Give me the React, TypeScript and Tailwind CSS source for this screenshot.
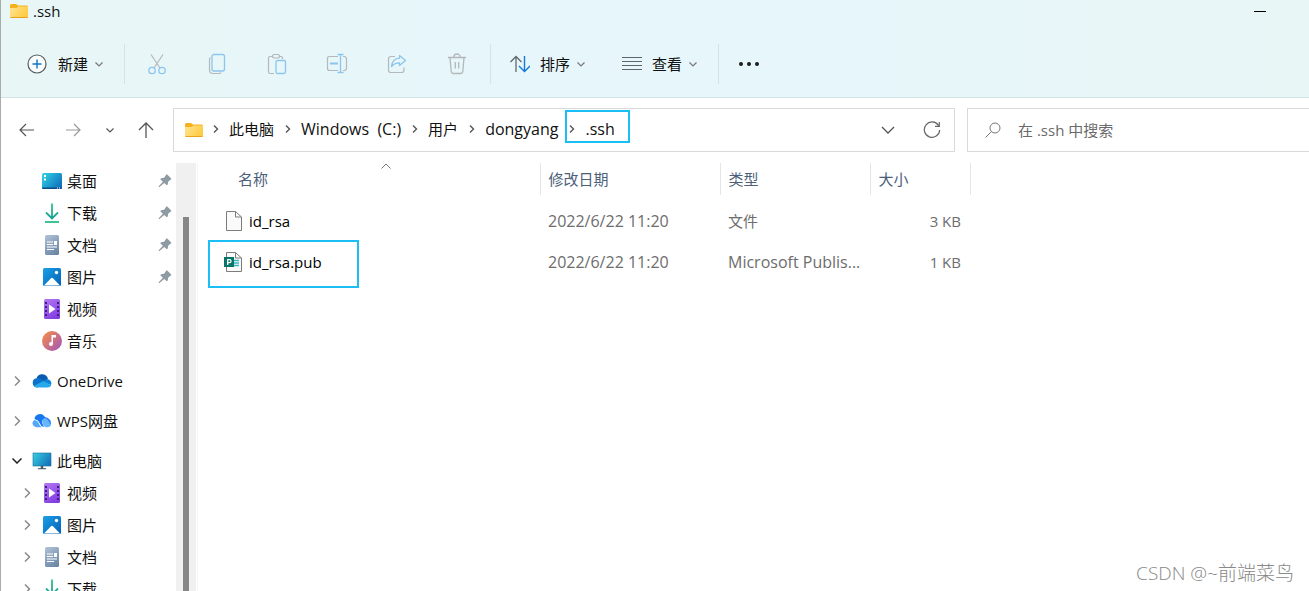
import type { ReactNode } from "react";
import { clsx } from "clsx";

type IconName = "desktop" | "download" | "document" | "picture" | "video" | "music" | "onedrive" | "wps" | "pc";

interface TreeItem {
    label: string;
    icon: IconName;
    pinned?: boolean;
    nested?: boolean;
    state?: "closed" | "open";
    spaced?: boolean;
}

const treeItems: TreeItem[] = [
    { label: "桌面", icon: "desktop", pinned: true, nested: true },
    { label: "下载", icon: "download", pinned: true, nested: true },
    { label: "文档", icon: "document", pinned: true, nested: true },
    { label: "图片", icon: "picture", pinned: true, nested: true },
    { label: "视频", icon: "video", nested: true },
    { label: "音乐", icon: "music", nested: true },
    { label: "OneDrive", icon: "onedrive", state: "closed", spaced: true },
    { label: "WPS网盘", icon: "wps", state: "closed", spaced: true },
    { label: "此电脑", icon: "pc", state: "open", spaced: true },
    { label: "视频", icon: "video", nested: true, state: "closed" },
    { label: "图片", icon: "picture", nested: true, state: "closed" },
    { label: "文档", icon: "document", nested: true, state: "closed" },
    { label: "下载", icon: "download", nested: true, state: "closed" },
];

const files = [
    { name: "id_rsa", date: "2022/6/22 11:20", type: "文件", size: "3 KB" },
    { name: "id_rsa.pub", date: "2022/6/22 11:20", type: "Microsoft Publis...", size: "1 KB", marked: true },
];

const crumbs = ["此电脑", "Windows  (C:)", "用户", "dongyang", ".ssh"];

// Latin labels are set one size up so they sit level with the Chinese ones
const latinSize = (text: string) => (/[a-z]/i.test(text) ? "text-[16px]" : "text-[15px]");

function Svg({ w, h, children, className }: { w: number; h: number; children: ReactNode; className?: string }) {
    return (
        <svg
            width={w}
            height={h}
            viewBox={`0 0 ${w} ${h}`}
            fill="none"
            aria-hidden="true"
            className={clsx("shrink-0", className)}
        >
            {children}
        </svg>
    );
}

function FolderIcon() {
    return (
        <Svg w={18} h={14}>
            <path d="M0 1.5Q0 0 1.5 0H6l2 1.5H16.500Q18 1.500 18 3V12H0Z" fill="#f5b21d" />
            <path d="M0 4H6.500L8.500 2.500H18V12.500Q18 14 16.500 14H1.500Q0 14 0 12.500Z" fill="url(#folderFront)" />
            <path d="M0 12.500Q0 14 1.500 14H16.500Q18 14 18 12.500V13H0Z" fill="#e9a21c" />
            <defs>
                <linearGradient id="folderFront" x1="0" y1="2" x2="18" y2="14" gradientUnits="userSpaceOnUse">
                    <stop stopColor="#ffe594" />
                    <stop offset="1" stopColor="#ffc736" />
                </linearGradient>
            </defs>
        </Svg>
    );
}

function Chevron({ className }: { className?: string }) {
    return (
        <Svg w={8} h={5} className={className}>
            <path d="M.5.5 4 4 7.500.5" stroke="currentColor" strokeWidth="1.200" />
        </Svg>
    );
}

function CrumbChevron() {
    return (
        <Svg w={6} h={8} className="text-[#555]">
            <path d="M1 .5 4.500 4 1 7.500" stroke="currentColor" strokeWidth="1.400" />
        </Svg>
    );
}

function TreeIcon({ name }: { name: IconName }) {
    switch (name) {
        case "desktop":
            return (
                <Svg w={20} h={20}>
                    <rect y="2" width="20" height="16" rx="1.500" fill="url(#screen)" />
                    <path d="M0 16.500H20Q20 18 18.500 18H1.500Q0 18 0 16.500Z" fill="#0b4f86" />
                    <path d="M2 4h2v2H2zM2 7.500h2v2H2z" fill="#fff" />
                    <path d="M15 17h1M17 17h1" stroke="#fff" />
                    <defs>
                        <linearGradient id="screen" x1="0" y1="2" x2="20" y2="18" gradientUnits="userSpaceOnUse">
                            <stop stopColor="#33d6e6" />
                            <stop offset="1" stopColor="#0c64b8" />
                        </linearGradient>
                    </defs>
                </Svg>
            );
        case "download":
            return (
                <Svg w={20} h={20}>
                    <path d="M10 .5V15M4 9.500l6 6 6-6" stroke="url(#down)" strokeWidth="1.800" />
                    <path d="M3 19H17" stroke="#2bbd86" strokeWidth="1.800" />
                    <defs>
                        <linearGradient id="down" x1="0" y1="0" x2="0" y2="18" gradientUnits="userSpaceOnUse">
                            <stop stopColor="#35c481" />
                            <stop offset="1" stopColor="#119c9a" />
                        </linearGradient>
                    </defs>
                </Svg>
            );
        case "document":
            return (
                <Svg w={20} h={20}>
                    <rect x="3" width="14" height="20" rx="1.500" fill="url(#doc)" />
                    <path d="M5 7h6M5 9.500h6M5 12h10M5 14.500h7" stroke="#fff" strokeWidth="1.200" />
                    <path d="M12 6h3v4h-3z" fill="#fff" />
                    <defs>
                        <linearGradient id="doc" x1="3" y1="0" x2="17" y2="20" gradientUnits="userSpaceOnUse">
                            <stop stopColor="#b1c3d8" />
                            <stop offset="1" stopColor="#64809f" />
                        </linearGradient>
                    </defs>
                </Svg>
            );
        case "picture":
            return (
                <Svg w={20} h={20}>
                    <rect x="1" y="1" width="18" height="18" rx="1.500" fill="url(#pic)" />
                    <path d="M2 18.500 9 11.300Q10 10.300 11 11.300L18 18.500Z" fill="#fff" />
                    <circle cx="14.500" cy="5.500" r="1.700" fill="#fff" />
                    <defs>
                        <linearGradient id="pic" x1="1" y1="1" x2="19" y2="19" gradientUnits="userSpaceOnUse">
                            <stop stopColor="#19a0e6" />
                            <stop offset="1" stopColor="#0560b8" />
                        </linearGradient>
                    </defs>
                </Svg>
            );
        case "video":
            return (
                <Svg w={20} h={20}>
                    <rect x="2" width="16" height="20" rx="1.500" fill="url(#vid)" />
                    <path d="M4 3v16M16 3v16" stroke="#42207a" strokeWidth="2" strokeDasharray="2 2" />
                    <path d="M7 5.500V14.500L13.500 10Z" fill="#fff" />
                    <defs>
                        <linearGradient id="vid" x1="2" y1="0" x2="14" y2="20" gradientUnits="userSpaceOnUse">
                            <stop stopColor="#b378f4" />
                            <stop offset="1" stopColor="#813ae0" />
                        </linearGradient>
                    </defs>
                </Svg>
            );
        case "music":
            return (
                <Svg w={20} h={20}>
                    <circle cx="10" cy="10" r="10" fill="url(#mus)" />
                    <path d="M9.500 13V4H14V6.500H11V13Z" fill="#fff" />
                    <circle cx="9" cy="13" r="2" fill="#fff" />
                    <defs>
                        <linearGradient id="mus" x1="2" y1="3" x2="17" y2="17" gradientUnits="userSpaceOnUse">
                            <stop stopColor="#f0894f" />
                            <stop offset="1" stopColor="#ae5cad" />
                        </linearGradient>
                    </defs>
                </Svg>
            );
        case "onedrive":
            return (
                <Svg w={20} h={14}>
                    <path d="M4.500 4.200A6 6 0 0 1 16 5.200L10 9Z" fill="#0a5cae" />
                    <path d="M4.500 4.200Q7 3.600 9 4.800L15 8.500 5 13.500A4.700 4.700 0 0 1 4.500 4.200Z" fill="#0c72c9" />
                    <path d="M12 6.700Q13.500 5 16 5.200A4.200 4.200 0 0 1 19 11L12 8.500Z" fill="#1284d8" />
                    <path d="M1.800 12 11.500 7 19.300 11.200Q18.300 13.500 15.700 13.500H5Q3 13.500 1.800 12Z" fill="#29a8ea" />
                </Svg>
            );
        case "wps":
            return (
                <Svg w={20} h={14}>
                    <path d="M2.500 5.200A5.500 5.500 0 0 1 12.500 2.500L15 4.500Q10.500 4 10 8.500L12 13.300Q9 12.500 7.800 9.500Q6.500 5.800 2.500 5.200Z" fill="#1677f0" />
                    <path d="M2.300 6Q6 6.500 7 10Q8 12.500 10 13.300H4.200A4 4 0 0 1 2.300 6Z" fill="#54a6fa" />
                    <path d="M10.500 5.500Q12 4 14 4.500Q16.300 5 17 7Q19.500 8 19 10.500Q18.500 13.300 15.500 13.300H13.500Q9.500 10.500 10.500 5.500Z" fill="#65b5ff" />
                    <path d="M12 3.200Q16 2.800 18.500 6.500Q19.500 9 18 10.500Q17.500 6 12 3.200Z" fill="#2b7ff2" />
                </Svg>
            );
        case "pc":
            return (
                <Svg w={20} h={18}>
                    <rect x="1" y="1" width="18" height="13" fill="url(#pcScreen)" stroke="#1a6f9f" strokeWidth=".6" />
                    <path d="M9 14h2v2.500h3V17H6v-.5h3Z" fill="#4d5963" stroke="#4d5963" strokeWidth=".5" />
                    <defs>
                        <linearGradient id="pcScreen" x1="1" y1="1" x2="19" y2="14" gradientUnits="userSpaceOnUse">
                            <stop stopColor="#36d0df" />
                            <stop offset="1" stopColor="#1068b6" />
                        </linearGradient>
                    </defs>
                </Svg>
            );
    }
}

function PinIcon() {
    return (
        <Svg w={14} h={14}>
            <path
                d="M8.300.6Q8.900.3 9.500.8L13 4.300Q13.500 5 12.900 5.400L10.300 7.600 9.700 10.600 8.800 11.300 6.200 8.900 1.500 13H.7V12.300L4.900 7.800 2.300 5.200 3 4.300 6.200 3.700Z"
                fill="#8e9ba3"
            />
        </Svg>
    );
}

function FileIcon({ publisher }: { publisher?: boolean }) {
    return (
        <Svg w={20} h={20}>
            <path d="M3.500.5H12.500L18.500 6V19.500H3.500Z" fill="#fafafa" stroke="#7c7c7c" />
            <path d="M12.500.5V6H18.500" stroke="#7c7c7c" />
            {publisher && (
                <>
                    <path d="M11 8.500h5M11 11h5M11 13.500h5" stroke="#35b9c4" strokeWidth="1.500" />
                    <rect x="1" y="5" width="10" height="10" fill="#077568" />
                    <path d="M4.700 13V7.700H6.500a1.500 1.500 0 0 1 0 3H4.700" stroke="#fff" strokeWidth="1.300" />
                </>
            )}
        </Svg>
    );
}

function ToolButton({ label, children }: { label: string; children: ReactNode }) {
    return (
        <button type="button" aria-label={label} className="flex h-10 w-10 items-center justify-center">
            <Svg w={22} h={22}>{children}</Svg>
        </button>
    );
}

function MenuButton({ label, icon, className }: { label: string; icon: ReactNode; className?: string }) {
    return (
        <button type="button" className={clsx("flex h-10 items-center", className)}>
            {icon}
            <span className="ml-[10px]">{label}</span>
            <Chevron className="ml-[7px] text-[#777]" />
        </button>
    );
}

function Divider() {
    return <span className="h-10 w-px bg-[#d6e3e4]" />;
}

function Toolbar() {
    return (
        <div className="mt-5 flex items-center pl-[26px]">
            <MenuButton
                label="新建"
                className="w-[97px]"
                icon={
                    <Svg w={20} h={20} className="mr-px">
                        <circle cx="10" cy="10" r="9" fill="#fafdfd" stroke="#555b60" strokeWidth="1.200" />
                        <path d="M10 5.500v9M5.500 10h9" stroke="#1273c8" strokeWidth="1.400" />
                    </Svg>
                }
            />
            <Divider />
            <div className="flex gap-5 px-3">
                <ToolButton label="剪切">
                    <path d="M5 1.500 14 15M17 1.500 8 15" stroke="#b3b8ba" strokeWidth="1.200" />
                    <circle cx="6" cy="17.500" r="3.200" stroke="#8cc5ee" strokeWidth="1.300" />
                    <circle cx="16" cy="17.500" r="3.200" stroke="#8cc5ee" strokeWidth="1.300" />
                </ToolButton>
                <ToolButton label="复制">
                    <path d="M4.500 4.500Q3.500 5 3.500 6.500V17Q3.500 20.500 7 20.500H13Q14.500 20.500 15 19.500" stroke="#b3b8ba" strokeWidth="1.200" />
                    <rect x="6" y="1.500" width="12.500" height="16.500" rx="2" stroke="#8cc5ee" strokeWidth="1.300" />
                </ToolButton>
                <ToolButton label="粘贴">
                    <path d="M6.500 3.500H4Q2.500 3.500 2.500 5V19Q2.500 20.500 4 20.500H8M13.500 3.500H15Q16.500 3.500 16.500 5V6" stroke="#b3b8ba" strokeWidth="1.200" />
                    <rect x="6.500" y="1.500" width="7" height="3.500" rx="1.700" stroke="#b3b8ba" strokeWidth="1.200" />
                    <rect x="10" y="7.500" width="9.500" height="13" rx="1.500" stroke="#8cc5ee" strokeWidth="1.300" />
                </ToolButton>
                <ToolButton label="重命名">
                    <path d="M12 3.500H3.500Q1.500 3.500 1.500 5.500V15.500Q1.500 17.500 3.500 17.500H12M17 3.500H18Q20.500 3.500 20.500 6V15Q20.500 17.500 18 17.500H17" stroke="#b3b8ba" strokeWidth="1.200" />
                    <path d="M11.500 1.500H17.500M11.500 19.500H17.500M14.500 1.500V19.500" stroke="#8cc5ee" strokeWidth="1.300" />
                    <path d="M4 10.500H12" stroke="#8cc5ee" strokeWidth="2" />
                </ToolButton>
                <ToolButton label="共享">
                    <path d="M9 3.500H5Q2.500 3.500 2.500 6V17Q2.500 19.500 5 19.500H15.500Q18 19.500 18 17V14.500" stroke="#b3b8ba" strokeWidth="1.200" />
                    <path d="M13.500 2.500 19.500 7.500 13.500 12.500V9.800Q8.500 9.800 5.500 13.500Q6.500 5.500 13.500 5.200Z" stroke="#8cc5ee" strokeWidth="1.300" strokeLinejoin="round" />
                </ToolButton>
                <ToolButton label="删除">
                    <path d="M2 4.500H20M8 4V3.500A3 2.500 0 0 1 14 3.500V4M4 4.500 5.200 18.500Q5.400 20.500 7.200 20.500H14.800Q16.600 20.500 16.800 18.500L18 4.500M9.300 9V15.500M12.700 9V15.500" stroke="#b3b8ba" strokeWidth="1.300" />
                </ToolButton>
            </div>
            <span className="w-px" />
            <Divider />
            <MenuButton
                label="排序"
                className="ml-[19px] w-28"
                icon={
                    <Svg w={20} h={18}>
                        <path d="M6 17V1.500M.5 7 6 1.500 11.500 7" stroke="#63696d" strokeWidth="1.300" />
                        <path d="M14.500 1V16.500M9 11l5.500 5.500L20 11" stroke="#1479d5" strokeWidth="1.400" />
                    </Svg>
                }
            />
            <MenuButton
                label="查看"
                className="w-24"
                icon={
                    <Svg w={20} h={14}>
                        <path d="M0 .5h20M0 4.500h20M0 8.500h20M0 12.500h20" stroke="#5f6568" strokeWidth="1.200" />
                    </Svg>
                }
            />
            <Divider />
            <button type="button" aria-label="查看更多" className="ml-[10px] flex h-10 w-10 items-center justify-center">
                <Svg w={20} h={4}>
                    <circle cx="2" cy="2" r="2" fill="#1b1b1b" />
                    <circle cx="10" cy="2" r="2" fill="#1b1b1b" />
                    <circle cx="18" cy="2" r="2" fill="#1b1b1b" />
                </Svg>
            </button>
        </div>
    );
}

function AddressBar() {
    return (
        <div className="flex h-11 min-w-0 flex-1 items-center border border-[#d9d9d9] pl-[11px]">
            <FolderIcon />
            <ol className="flex min-w-0 flex-1 items-center pb-[2px] pl-[10px]">
                {crumbs.map((crumb, i) => (
                    <li key={crumb} className="relative flex items-center">
                        <CrumbChevron />
                        <a href="#" className={clsx("mr-[11px] ml-[10px] leading-6 whitespace-pre", latinSize(crumb))}>{crumb}</a>
                        {i === crumbs.length - 1 && (
                            <span className="pointer-events-none absolute -top-[7px] -right-1 -bottom-[2px] -left-1 border-2 border-[#1cbff5]" />
                        )}
                    </li>
                ))}
            </ol>
            <button type="button" aria-label="以前的位置" className="flex h-10 w-10 items-center justify-center text-[#555]">
                <Svg w={14} h={8}>
                    <path d="M1 1 7 7 13 1" stroke="currentColor" strokeWidth="1.300" />
                </Svg>
            </button>
            <button type="button" aria-label="刷新" className="mr-[2px] ml-1 flex h-10 w-10 items-center justify-center text-[#666]">
                <Svg w={18} h={18}>
                    <path d="M15.500 4.500A7.700 7.700 0 1 0 16.700 9M16.300 1V5.300H12" stroke="currentColor" strokeWidth="1.200" />
                </Svg>
            </button>
        </div>
    );
}

function NavRow() {
    return (
        <div className="flex items-center py-[10px] pl-[18px]">
            <button type="button" aria-label="后退" className="text-[#555]">
                <Svg w={16} h={14}>
                    <path d="M15 7H1M7 1 1 7 7 13" stroke="currentColor" strokeWidth="1.200" />
                </Svg>
            </button>
            <button type="button" aria-label="前进" className="ml-[30px] text-[#999]">
                <Svg w={16} h={14}>
                    <path d="M1 7H15M9 1 15 7 9 13" stroke="currentColor" strokeWidth="1.200" />
                </Svg>
            </button>
            <button type="button" aria-label="最近浏览的位置" className="ml-[25px] text-[#555]">
                <Chevron />
            </button>
            <button type="button" aria-label="上移" className="mr-[19px] ml-6 text-[#555]">
                <Svg w={16} h={16}>
                    <path d="M8 16V1M1 8 8 1 15 8" stroke="currentColor" strokeWidth="1.300" />
                </Svg>
            </button>
            <AddressBar />
            <label className="ml-3 flex h-11 w-[342px] items-center border border-r-0 border-[#d9d9d9] pl-[17px]">
                <Svg w={16} h={16}>
                    <circle cx="10" cy="6" r="5" stroke="#777" />
                    <path d="M6.300 9.700.5 15.500" stroke="#777" />
                </Svg>
                <input
                    type="search"
                    aria-label="搜索"
                    placeholder="在 .ssh 中搜索"
                    className="ml-[17px] min-w-0 flex-1 outline-none placeholder:text-[#6a6a6a]"
                />
            </label>
        </div>
    );
}

function Sidebar() {
    return (
        <nav className="flex w-[197px] shrink-0 border-r border-[#f5f5f5]">
            <ul className="flex-1 pt-[2px]">
                {treeItems.map((item, i) => (
                    <li key={i} className={clsx("flex h-8 items-center pr-1", item.nested ? "pl-[21px]" : "pl-[11px]", item.spaced && "mt-2")}>
                        <span className="flex w-5">
                            {item.state === "closed" && (
                                <Svg w={10} h={10} className="text-[#8a8a8a]">
                                    <path d="M3 .5 7.500 5 3 9.500" stroke="currentColor" strokeWidth="1.500" />
                                </Svg>
                            )}
                            {item.state === "open" && (
                                <Svg w={10} h={6} className="text-[#222]">
                                    <path d="M.5.5 5 5 9.500.5" stroke="currentColor" strokeWidth="1.500" />
                                </Svg>
                            )}
                        </span>
                        <TreeIcon name={item.icon} />
                        <a href="#" className="ml-[5px] flex-1">{item.label}</a>
                        {item.pinned && <PinIcon />}
                    </li>
                ))}
            </ul>
            <div className="mr-px flex w-5 justify-center bg-[#f0f0f0] pt-[54px]">
                <div className="w-[6px] bg-[#868686]" />
            </div>
        </nav>
    );
}

function FileTable() {
    return (
        <div className="min-w-0 flex-1">
            <table className="w-full table-fixed text-left">
                <colgroup>
                    <col className="w-[342px]" />
                    <col className="w-[180px]" />
                    <col className="w-[150px]" />
                    <col className="w-[100px]" />
                    <col />
                </colgroup>
                <thead className="text-[#4c607a]">
                    <tr className="h-8">
                        <th className="relative border-r border-[#e5e5e5] pl-10 font-normal">
                            名称
                            <Svg w={10} h={6} className="absolute top-0 left-[183px] text-[#777]">
                                <path d="M.5 5.500 5 1 9.500 5.500" stroke="currentColor" />
                            </Svg>
                        </th>
                        <th className="border-r border-[#e5e5e5] pl-2 font-normal">修改日期</th>
                        <th className="border-r border-[#e5e5e5] pl-2 font-normal">类型</th>
                        <th className="border-r border-[#e5e5e5] pl-2 font-normal">大小</th>
                        <td />
                    </tr>
                </thead>
                <tbody className="text-[#6d6d6d]">
                    <tr className="h-[5px]" />
                    {files.map((file) => (
                        <tr key={file.name} className="h-[41px]">
                            <td className="relative pl-[25px] text-black">
                                <a href="#" className="flex items-center gap-[6px]">
                                    <FileIcon publisher={file.marked} />
                                    {file.name}
                                </a>
                                {file.marked && (
                                    <span className="pointer-events-none absolute -top-px left-[10px] h-12 w-[151px] border-2 border-[#1cbff5]" />
                                )}
                            </td>
                            <td className="pl-2 text-[16px]">{file.date}</td>
                            <td className={clsx("pl-2 whitespace-nowrap", latinSize(file.type))}>{file.type}</td>
                            <td className="pr-[9px] text-right">{file.size}</td>
                            <td />
                        </tr>
                    ))}
                </tbody>
            </table>
        </div>
    );
}

export default function App() {
    return (
        <div className="relative flex h-screen flex-col overflow-hidden border-l border-[#ababab] bg-white font-['Open_Sans','Noto_Sans_CJK_SC',sans-serif] text-[15px] leading-6 text-[#111]">
            <header className="border-b border-[#d3e3e5] bg-linear-to-r from-[#e8f6f6] via-[#e6f6fb] to-[#e8f6f6] pb-[13px]">
                <div className="flex h-6 items-center justify-between pr-[43px] pb-[2px] pl-[9px]">
                    <div className="flex items-center gap-[5px]">
                        <FolderIcon />
                        <h1>.ssh</h1>
                    </div>
                    <button type="button" aria-label="最小化" className="flex h-5 w-3 items-center">
                        <span className="h-px w-3 bg-black" />
                    </button>
                </div>
                <Toolbar />
            </header>
            <NavRow />
            <main className="mt-px flex min-h-0 flex-1 overflow-hidden">
                <Sidebar />
                <FileTable />
            </main>
            <p className="absolute right-[15px] bottom-1 text-[19px] leading-7 font-light text-[#888]">
                CSDN @~前端菜鸟
            </p>
        </div>
    );
}
